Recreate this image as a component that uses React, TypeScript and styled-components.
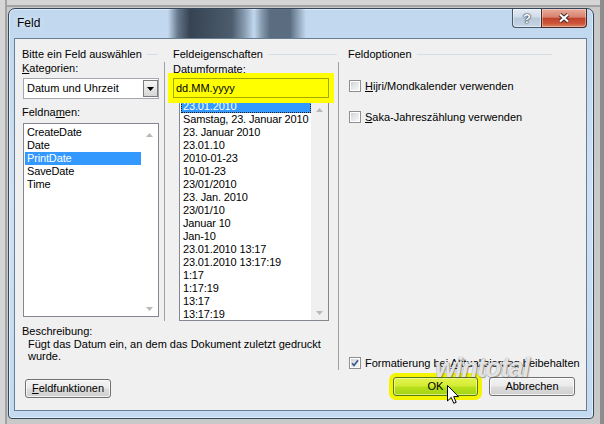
import React from "react";
import styled, { createGlobalStyle } from "styled-components";

const FONT = `"Liberation Sans", Arial, Helvetica, sans-serif`;

const GlobalStyle = createGlobalStyle`
  html, body { margin: 0; padding: 0; }
  body { background: #cbcbcb; font-family: ${FONT}; font-size: 11px; color: #000; }
  *, *::before, *::after { box-sizing: border-box; }
`;

const Desktop = styled.div`
  width: 604px;
  height: 424px;
  overflow: hidden;
  padding: 8px 0 0 8px;
  background:
    linear-gradient(90deg, #d5d5d5 0 5px, #a2a2a2 5px 7px, transparent 7px),
    linear-gradient(180deg, #d5d5d5 0 5px, #a2a2a2 5px 7px, transparent 7px),
    #c9c9c9;
  box-shadow: inset -4px 0 0 #8d8d8d;
`;

const Window = styled.div`
  width: 586px;
  height: 411px;
  display: flex;
  flex-direction: column;
  padding: 0 6px 7px 5px;
  border: 1px solid #33475c;
  border-radius: 7px 7px 4px 4px;
  background: linear-gradient(180deg, #c0d7ee 0%, #cfe1f4 45%, #c3daf1 100%);
  box-shadow: inset 0 0 0 1px rgba(255, 255, 255, 0.5);
`;

const TitleBar = styled.div`
  height: 29px;
  flex: none;
  display: flex;
  align-items: flex-start;
  padding-left: 3px;
  background: linear-gradient(
    90deg,
    transparent 154px,
    rgba(40, 54, 70, 0.6) 164px,
    rgba(34, 46, 60, 0.88) 176px,
    rgba(48, 62, 78, 0.8) 218px,
    rgba(60, 76, 94, 0.45) 230px,
    transparent 240px,
    rgba(60, 76, 94, 0.45) 248px,
    rgba(56, 72, 90, 0.75) 256px,
    rgba(56, 72, 90, 0.75) 276px,
    transparent 292px
  );
`;

const TitleText = styled.div`
  flex: 1;
  margin-top: 7px;
  font-size: 12px;
  line-height: 14px;
  text-shadow: 0 0 6px rgba(255, 255, 255, 0.9);
`;

const CaptionButtons = styled.div`
  display: flex;
`;

const HelpButton = styled.div`
  width: 29px;
  height: 19px;
  border: 1px solid #46586c;
  border-top: none;
  border-right: none;
  border-radius: 0 0 0 4px;
  background: linear-gradient(180deg, #e4ecf5 0%, #d0dbe8 45%, #b8c8da 50%, #c8d6e5 100%);
  box-shadow: inset 0 0 0 1px rgba(255, 255, 255, 0.45);
  display: flex;
  align-items: center;
  justify-content: center;
  color: #fff;
  font-weight: bold;
  font-size: 13px;
  line-height: 13px;
  text-shadow: 0 0 1px #2a3848, 0 0 1px #2a3848, 0 0 2px #2a3848;
`;

const CloseButton = styled.div`
  width: 46px;
  height: 19px;
  border: 1px solid #4a2a26;
  border-top: none;
  border-radius: 0 0 4px 0;
  background: linear-gradient(180deg, #e9ab9b 0%, #d8826e 45%, #c2432c 52%, #cc553a 80%, #dc8763 100%);
  box-shadow: inset 0 0 0 1px rgba(255, 255, 255, 0.35);
  display: flex;
  align-items: center;
  justify-content: center;
`;

const Client = styled.div`
  position: relative;
  flex: 1;
  background: #f0f0f0;
  border: 1px solid #6a7e93;
  padding: 9px 11px 0 7px;
`;

const Main = styled.div`
  display: flex;
  height: 322px;
`;

const LeftPart = styled.div`
  width: 316px;
  display: flex;
  flex-direction: column;
`;

const Columns = styled.div`
  display: flex;
  align-items: flex-start;
  height: 273px;
`;

const LeftCol = styled.div`
  width: 137px;
  margin-right: 5px;
  display: flex;
  flex-direction: column;
`;

const MidCol = styled.div`
  width: 174px;
  display: flex;
  flex-direction: column;
`;

const RightCol = styled.div`
  width: 214px;
  display: flex;
  flex-direction: column;
`;

const GroupHeader = styled.div<{ $indent: number; $right?: number }>`
  display: flex;
  align-items: center;
  gap: 5px;
  height: 13px;
  line-height: 13px;
  white-space: nowrap;
  padding-left: ${(p) => p.$indent}px;
  padding-right: ${(p) => p.$right ?? 0}px;
`;

const HeaderLine = styled.div`
  flex: 1;
  height: 1px;
  background: #d5dde6;
`;

const GroupBody = styled.div<{ $pad: number; $top?: number }>`
  margin-top: 1px;
  border-left: 1px solid #a0a0a0;
  padding-left: ${(p) => p.$pad}px;
  padding-top: ${(p) => p.$top ?? 0}px;
  display: flex;
  flex-direction: column;
`;

const RightBody = styled(GroupBody)`
  flex: 1;
  padding-bottom: 1px;
`;

const Label = styled.div<{ $top?: number }>`
  height: 13px;
  line-height: 13px;
  white-space: nowrap;
  margin-top: ${(p) => p.$top ?? 0}px;
`;

const ComboBox = styled.div`
  margin-top: 3px;
  margin-left: 1px;
  width: 136px;
  height: 21px;
  border: 1px solid #a3a8b0;
  background: #fff;
  display: flex;
  align-items: stretch;
  padding: 1px 0 1px 3px;
`;

const ComboText = styled.span`
  flex: 1;
  line-height: 17px;
`;

const ComboButton = styled.div`
  width: 15px;
  border: 1px solid #7c7c7c;
  background: linear-gradient(180deg, #f6f6f6 0%, #e6e6e6 50%, #d6d6d6 100%);
  display: flex;
  align-items: center;
  justify-content: center;
`;

const FormatInput = styled.div`
  position: relative;
  z-index: 1;
  margin-top: 2px;
  width: 156px;
  height: 20px;
  border: 1px solid #a6a800;
  background: #ffff00;
  box-shadow: 0 0 0 5px #ffff00;
  padding-left: 2px;
  line-height: 18px;
  font-size: 11px;
`;

const ListBox = styled.div<{ $w: number; $h: number; $left?: number; $top?: number }>`
  width: ${(p) => p.$w}px;
  height: ${(p) => p.$h}px;
  margin-left: ${(p) => p.$left ?? 0}px;
  margin-top: ${(p) => p.$top ?? 0}px;
  border: 1px solid #828790;
  background: #fff;
  display: flex;
  overflow: hidden;
`;

const ListItems = styled.div<{ $pt: number }>`
  flex: 1;
  padding: ${(p) => p.$pt}px 0 0 1px;
  overflow: hidden;
`;

const ListItem = styled.div<{ $selected?: boolean; $focus?: boolean }>`
  height: 13px;
  line-height: 13px;
  padding-left: 2px;
  white-space: nowrap;
  letter-spacing: -0.15px;
  background: ${(p) => (p.$selected ? "#3399ff" : "transparent")};
  color: ${(p) => (p.$selected ? "#fff" : "#000")};
  outline: ${(p) => (p.$focus ? "1px dotted #1a1a1a" : "none")};
  outline-offset: -1px;
`;

const ScrollBar = styled.div<{ $track: string }>`
  width: 17px;
  background: ${(p) => p.$track};
  display: flex;
  flex-direction: column;
  align-items: center;
  justify-content: space-between;
  padding: 9px 0 5px;
`;

const Description = styled.div`
  margin-top: 4px;
`;

const DescText = styled.div`
  padding-left: 6px;
  line-height: 12px;
`;

const CheckRow = styled.div<{ $top?: number; $auto?: boolean }>`
  display: flex;
  align-items: center;
  gap: 4px;
  height: 13px;
  white-space: nowrap;
  margin-top: ${(p) => (p.$auto ? "auto" : `${p.$top ?? 0}px`)};
`;

const CheckBox = styled.div`
  width: 12px;
  height: 12px;
  border: 1px solid #8e8f8f;
  background: #fff;
  padding: 1px;
  display: flex;
`;

const CheckInner = styled.div`
  flex: 1;
  background: linear-gradient(135deg, #cfd2d6 0%, #e6e7e9 50%, #f8f8f8 100%);
  display: flex;
  align-items: center;
  justify-content: center;
`;

const ButtonRow = styled.div`
  margin-top: 7px;
  padding-left: 3px;
  display: flex;
  justify-content: space-between;
  align-items: flex-start;
`;

const ButtonGroup = styled.div`
  display: flex;
  gap: 11px;
`;

const PushButton = styled.div<{ $w: number; $top?: number }>`
  width: ${(p) => p.$w}px;
  height: 19px;
  margin-top: ${(p) => p.$top ?? 0}px;
  border: 1px solid #707070;
  border-radius: 3px;
  background: linear-gradient(180deg, #f2f2f2 0%, #ebebeb 48%, #dddddd 52%, #cfcfcf 100%);
  box-shadow: inset 0 0 0 1px rgba(255, 255, 255, 0.75);
  display: flex;
  align-items: center;
  justify-content: center;
  line-height: 13px;
`;

const DefaultButton = styled(PushButton)`
  position: relative;
  border-color: #557a0e;
  background: linear-gradient(180deg, #e4f34a 0%, #d3ec36 48%, #b8df1c 52%, #a2d412 100%);
  box-shadow: inset 0 0 0 1px rgba(255, 255, 200, 0.6), 0 0 0 4px #f4f400;
`;

const Cursor = styled.svg`
  position: absolute;
  left: 53px;
  top: 7px;
`;

const Watermark = styled.div`
  position: absolute;
  left: 420px;
  top: 314px;
  font-size: 27px;
  font-weight: bold;
  font-style: italic;
  letter-spacing: -1px;
  color: rgba(255, 255, 255, 0.82);
  text-shadow: 0 0 1px rgba(90, 90, 90, 0.8), 1px 1px 1px rgba(80, 80, 80, 0.5);
  pointer-events: none;
`;

const dateFormats = [
  "23.01.2010",
  "Samstag, 23. Januar 2010",
  "23. Januar 2010",
  "23.01.10",
  "2010-01-23",
  "10-01-23",
  "23/01/2010",
  "23. Jan. 2010",
  "23/01/10",
  "Januar 10",
  "Jan-10",
  "23.01.2010 13:17",
  "23.01.2010 13:17:19",
  "1:17",
  "1:17:19",
  "13:17",
  "13:17:19",
];

const fieldNames = ["CreateDate", "Date", "PrintDate", "SaveDate", "Time"];

const Arrow = ({ up }: { up?: boolean }) => (
  <svg width="7" height="4" viewBox="0 0 7 4">
    <polygon points={up ? "0,4 3.5,0 7,4" : "0,0 3.5,4 7,0"} fill="#b9b9b9" />
  </svg>
);

const Check = ({ checked }: { checked?: boolean }) => (
  <CheckBox>
    <CheckInner>
      {checked && (
        <svg width="8" height="8" viewBox="0 0 8 8">
          <path d="M1 4.2 L3 6.4 L7 1.2" fill="none" stroke="#3c5a8c" strokeWidth="1.7" />
        </svg>
      )}
    </CheckInner>
  </CheckBox>
);

export default function App() {
  return (
    <>
      <GlobalStyle />
      <Desktop>
        <Window>
          <TitleBar>
            <TitleText>Feld</TitleText>
            <CaptionButtons>
              <HelpButton>?</HelpButton>
              <CloseButton>
                <svg width="12" height="10" viewBox="0 0 12 10">
                  <path d="M2 1.5 L10 8.5 M10 1.5 L2 8.5" stroke="#3a2622" strokeWidth="4" />
                  <path d="M2 1.5 L10 8.5 M10 1.5 L2 8.5" stroke="#ffffff" strokeWidth="2.2" />
                </svg>
              </CloseButton>
            </CaptionButtons>
          </TitleBar>
          <Client>
            <Main>
              <LeftPart>
                <Columns>
                  <LeftCol>
                    <GroupHeader $indent={0} $right={1}>
                      <span>Bitte ein Feld auswählen</span>
                      <HeaderLine />
                    </GroupHeader>
                    <Label $top={1}>
                      <u>K</u>ategorien:
                    </Label>
                    <ComboBox>
                      <ComboText>Datum und Uhrzeit</ComboText>
                      <ComboButton>
                        <svg width="7" height="4" viewBox="0 0 7 4">
                          <polygon points="0,0 7,0 3.5,4" fill="#000" />
                        </svg>
                      </ComboButton>
                    </ComboBox>
                    <Label $top={7}>
                      Feldna<u>m</u>en:
                    </Label>
                    <ListBox $w={136} $h={194} $left={1} $top={4}>
                      <ListItems $pt={2}>
                        {fieldNames.map((n) => (
                          <ListItem key={n} $selected={n === "PrintDate"}>
                            {n}
                          </ListItem>
                        ))}
                      </ListItems>
                      <ScrollBar $track="#ffffff">
                        <Arrow up />
                        <Arrow />
                      </ScrollBar>
                    </ListBox>
                  </LeftCol>
                  <MidCol>
                    <GroupHeader $indent={9} $right={1}>
                      <span>Feldeigenschaften</span>
                      <HeaderLine />
                    </GroupHeader>
                    <GroupBody $pad={8} $top={1}>
                      <Label>
                        <u>D</u>atumformate:
                      </Label>
                      <FormatInput>dd.MM.yyyy</FormatInput>
                      <ListBox $w={150} $h={223} $left={6}>
                        <ListItems $pt={1}>
                          {dateFormats.map((f, i) => (
                            <ListItem key={f} $selected={i === 0} $focus={i === 0}>
                              {f}
                            </ListItem>
                          ))}
                        </ListItems>
                        <ScrollBar $track="#f0f0f0">
                          <Arrow up />
                          <Arrow />
                        </ScrollBar>
                      </ListBox>
                    </GroupBody>
                  </MidCol>
                </Columns>
                <Description>
                  <Label>Beschreibung:</Label>
                  <DescText>
                    Fügt das Datum ein, an dem das Dokument zuletzt gedruckt
                    <br />
                    wurde.
                  </DescText>
                </Description>
              </LeftPart>
              <RightCol>
                <GroupHeader $indent={10}>
                  <span>Feldoptionen</span>
                  <HeaderLine />
                </GroupHeader>
                <RightBody $pad={10} $top={17}>
                  <CheckRow>
                    <Check />
                    <span>
                      <u>H</u>ijri/Mondkalender verwenden
                    </span>
                  </CheckRow>
                  <CheckRow $top={18}>
                    <Check />
                    <span>
                      <u>S</u>aka-Jahreszählung verwenden
                    </span>
                  </CheckRow>
                  <CheckRow $auto>
                    <Check checked />
                    <span>
                      Formatierung bei <u>A</u>ktualisierung beibehalten
                    </span>
                  </CheckRow>
                </RightBody>
              </RightCol>
            </Main>
            <ButtonRow>
              <PushButton $w={86} $top={2}>
                <span>
                  <u>F</u>eldfunktionen
                </span>
              </PushButton>
              <ButtonGroup>
                <DefaultButton $w={85}>
                  OK
                  <Cursor width="13" height="20" viewBox="0 0 13 20">
                    <path
                      d="M0.5 0.5 V16 L4.2 12.4 L6.8 18.3 L9.2 17.3 L6.7 11.6 H11.5 Z"
                      fill="#fff"
                      stroke="#000"
                      strokeWidth="1"
                      strokeLinejoin="round"
                    />
                  </Cursor>
                </DefaultButton>
                <PushButton $w={86}>Abbrechen</PushButton>
              </ButtonGroup>
            </ButtonRow>
            <Watermark>wintotal</Watermark>
          </Client>
        </Window>
      </Desktop>
    </>
  );
}
